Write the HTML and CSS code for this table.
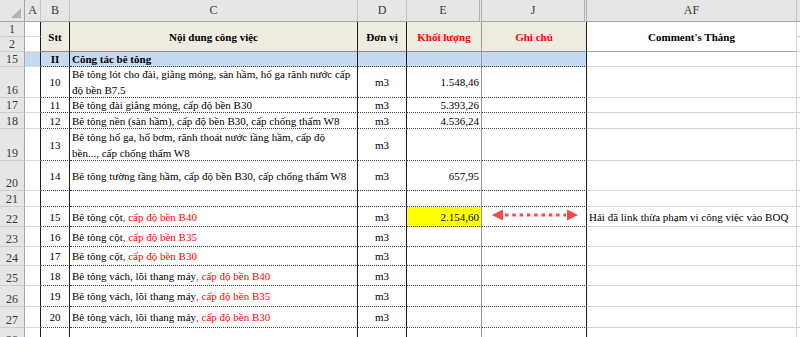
FILE: index.html
```html
<!DOCTYPE html>
<html lang="vi">
<head>
<meta charset="utf-8">
<title>Sheet</title>
<link rel="stylesheet" href="styles.css">
</head>
<body>
<div class="sheet">
  <!-- column letters -->
  <div class="h corner"><svg width="12" height="12" viewBox="0 0 12 12"><polygon points="11,1 11,11 1,11" fill="#b4b4b4"/></svg></div>
  <div class="h">A</div>
  <div class="h">B</div>
  <div class="h">C</div>
  <div class="h">D</div>
  <div class="h hid">E</div>
  <div class="h hid">J</div>
  <div class="h">AF</div>
  <div class="h last"></div>

  <!-- rows 1-2 -->
  <div class="r">1</div>
  <div class="a"></div>
  <div class="th b2 cB">Stt</div>
  <div class="th b2 cC">Nội dung công việc</div>
  <div class="th b2 cD">Đơn vị</div>
  <div class="th b2 cE red">Khối lượng</div>
  <div class="th b2 cJ red">Ghi chú</div>
  <div class="af b2 afh">Comment's Thẳng</div>
  <div class="x"></div>
  <div class="r">2</div>
  <div class="a"></div>
  <div class="x"></div>

  <!-- row 15 -->
  <div class="r">15</div>
  <div class="a blue"></div>
  <div class="c cB blue bold">II</div>
  <div class="c cC blue bold left">Công tác bê tông</div>
  <div class="c cD blue"></div>
  <div class="c cE blue"></div>
  <div class="c cJ blue"></div>
  <div class="af"></div>
  <div class="x"></div>

  <!-- row 16 -->
  <div class="r">16</div>
  <div class="a"></div>
  <div class="c cB">10</div>
  <div class="c cC left wrap">Bê tông lót cho đài, giằng móng, sàn hầm, hố ga rãnh nước cấp độ bền B7.5</div>
  <div class="c cD">m3</div>
  <div class="c cE num">1.548,46</div>
  <div class="c cJ"></div>
  <div class="af"></div>
  <div class="x"></div>

  <!-- row 17 -->
  <div class="r">17</div>
  <div class="a"></div>
  <div class="c cB">11</div>
  <div class="c cC left">Bê tông đài giằng móng, cấp độ bền B30</div>
  <div class="c cD">m3</div>
  <div class="c cE num">5.393,26</div>
  <div class="c cJ"></div>
  <div class="af"></div>
  <div class="x"></div>

  <!-- row 18 -->
  <div class="r">18</div>
  <div class="a"></div>
  <div class="c cB">12</div>
  <div class="c cC left">Bê tông nền (sàn hầm), cấp độ bền B30, cấp chống thấm W8</div>
  <div class="c cD">m3</div>
  <div class="c cE num">4.536,24</div>
  <div class="c cJ"></div>
  <div class="af"></div>
  <div class="x"></div>

  <!-- row 19 -->
  <div class="r">19</div>
  <div class="a"></div>
  <div class="c cB">13</div>
  <div class="c cC left wrap">Bê tông hố ga, hố bơm, rãnh thoát nước tầng hầm, cấp độ bền..., cấp chống thấm W8</div>
  <div class="c cD">m3</div>
  <div class="c cE num"></div>
  <div class="c cJ"></div>
  <div class="af"></div>
  <div class="x"></div>

  <!-- row 20 -->
  <div class="r">20</div>
  <div class="a"></div>
  <div class="c cB">14</div>
  <div class="c cC left">Bê tông tường tầng hầm, cấp độ bền B30, cấp chống thấm W8</div>
  <div class="c cD">m3</div>
  <div class="c cE num">657,95</div>
  <div class="c cJ"></div>
  <div class="af"></div>
  <div class="x"></div>

  <!-- row 21 -->
  <div class="r">21</div>
  <div class="a"></div>
  <div class="c cB"></div>
  <div class="c cC"></div>
  <div class="c cD"></div>
  <div class="c cE"></div>
  <div class="c cJ"></div>
  <div class="af"></div>
  <div class="x"></div>

  <!-- row 22 -->
  <div class="r">22</div>
  <div class="a"></div>
  <div class="c cB">15</div>
  <div class="c cC left">Bê tông cột<span class="red">, cấp độ bền B40</span></div>
  <div class="c cD">m3</div>
  <div class="c cE num yellow">2.154,60</div>
  <div class="c cJ arrowcell"><svg class="arrow" width="86" height="12" viewBox="0 0 86 12"><polygon points="0,6 11,0.5 11,11.5" fill="#ff4646"/><polygon points="86,6 75,0.5 75,11.5" fill="#ff4646"/><line x1="13" y1="6" x2="74" y2="6" stroke="#ff4646" stroke-width="3" stroke-dasharray="3.5 3.8"/></svg></div>
  <div class="af left">Hải đã link thừa phạm vi công việc vào BOQ</div>
  <div class="x"></div>

  <!-- row 23 -->
  <div class="r">23</div>
  <div class="a"></div>
  <div class="c cB">16</div>
  <div class="c cC left">Bê tông cột<span class="red">, cấp độ bền B35</span></div>
  <div class="c cD">m3</div>
  <div class="c cE"></div>
  <div class="c cJ"></div>
  <div class="af"></div>
  <div class="x"></div>

  <!-- row 24 -->
  <div class="r">24</div>
  <div class="a"></div>
  <div class="c cB">17</div>
  <div class="c cC left">Bê tông cột<span class="red">, cấp độ bền B30</span></div>
  <div class="c cD">m3</div>
  <div class="c cE"></div>
  <div class="c cJ"></div>
  <div class="af"></div>
  <div class="x"></div>

  <!-- row 25 -->
  <div class="r">25</div>
  <div class="a"></div>
  <div class="c cB">18</div>
  <div class="c cC left">Bê tông vách, lõi thang máy<span class="red">, cấp độ bền B40</span></div>
  <div class="c cD">m3</div>
  <div class="c cE"></div>
  <div class="c cJ"></div>
  <div class="af"></div>
  <div class="x"></div>

  <!-- row 26 -->
  <div class="r">26</div>
  <div class="a"></div>
  <div class="c cB">19</div>
  <div class="c cC left">Bê tông vách, lõi thang máy<span class="red">, cấp độ bền B35</span></div>
  <div class="c cD">m3</div>
  <div class="c cE"></div>
  <div class="c cJ"></div>
  <div class="af"></div>
  <div class="x"></div>

  <!-- row 27 -->
  <div class="r">27</div>
  <div class="a"></div>
  <div class="c cB">20</div>
  <div class="c cC left">Bê tông vách, lõi thang máy<span class="red">, cấp độ bền B30</span></div>
  <div class="c cD">m3</div>
  <div class="c cE"></div>
  <div class="c cJ"></div>
  <div class="af"></div>
  <div class="x"></div>

  <!-- row 28 -->
  <div class="r">28</div>
  <div class="a"></div>
  <div class="c cB"></div>
  <div class="c cC"></div>
  <div class="c cD"></div>
  <div class="c cE"></div>
  <div class="c cJ"></div>
  <div class="af"></div>
  <div class="x"></div>
</div>
</body>
</html>
```

FILE: styles.css
```css
html, body {
  margin: 0;
  padding: 0;
  background: #ffffff;
  overflow: hidden;
}

body {
  font-family: "Liberation Serif", "Times New Roman", serif;
  font-size: 11px;
  color: #000;
}

.sheet {
  display: grid;
  width: 800px;
  grid-template-columns: 25px 16px 29px 288px 49px 75px 105px 210px 1fr;
  grid-template-rows: 22px 15px 15px 15px 31px 15px 16px 32px 30px 16px 20px 20px 19px 20px 21px 21px 20px;
}

.sheet > div {
  box-sizing: border-box;
  display: flex;
  align-items: center;
  justify-content: center;
  overflow: hidden;
  white-space: nowrap;
}

/* column letter header */
.h {
  background: #e6e6e6;
  color: #3a3a3a;
  font-size: 12px;
  border-right: 1px solid #c4c4c4;
  border-bottom: 1px solid #a6a6a6;
}
.h.corner {
  justify-content: flex-end;
  align-items: flex-end;
  padding: 0 2px 2px 0;
  border-right: 1px solid #a6a6a6;
}
.h.hid {
  border-right: 3px double #b0b0b0;
}
.h.last {
  border-right: none;
}

/* row numbers */
.r {
  background: #e6e6e6;
  color: #3a3a3a;
  font-size: 12px;
  border-right: 1px solid #a6a6a6;
  border-bottom: 1px solid #cdcdcd;
  align-items: flex-end !important;
  line-height: 14px;
}

/* column A */
.a {
  background: #fff;
  border-right: 1px solid #1e1e1e;
  border-bottom: 1px solid #dadada;
}

/* table header cells (rows 1-2) */
.th {
  background: #eeece1;
  font-weight: bold;
  border-bottom: 1px solid #8c8c8c;
  border-right: 1px solid #1e1e1e;
}
.b2 {
  grid-row: span 2;
}

/* body cells */
.c {
  background: #fff;
  border-bottom: 1px dotted #3c3c3c;
  border-right: 1px solid #1e1e1e;
}
.cE.c, .th.cE {
  border-right: 1px solid #9a9a9a;
}
.cJ {
  position: relative;
}

/* AF column */
.af {
  background: #fff;
  border-right: 1px solid #d4d4d4;
  border-bottom: 1px solid #d4d4d4;
}
.afh {
  font-weight: bold;
  border-bottom: 1px solid #a6a6a6;
}
.x {
  border-bottom: 1px solid #d4d4d4;
}

.left {
  justify-content: flex-start !important;
  padding-left: 2px;
}
.num {
  justify-content: flex-end !important;
  padding-right: 2px;
}
.wrap {
  white-space: normal !important;
  line-height: 16px;
  padding-right: 5px;
}
.bold {
  font-weight: bold;
}
.red {
  color: #ff0000;
}
.blue {
  background: #c5d9f1 !important;
}
.yellow {
  background: #ffff00 !important;
}
.arrowcell {
  justify-content: flex-start !important;
  padding-left: 10px;
  padding-bottom: 3px;
}
.arrow {
  display: block;
}
```
